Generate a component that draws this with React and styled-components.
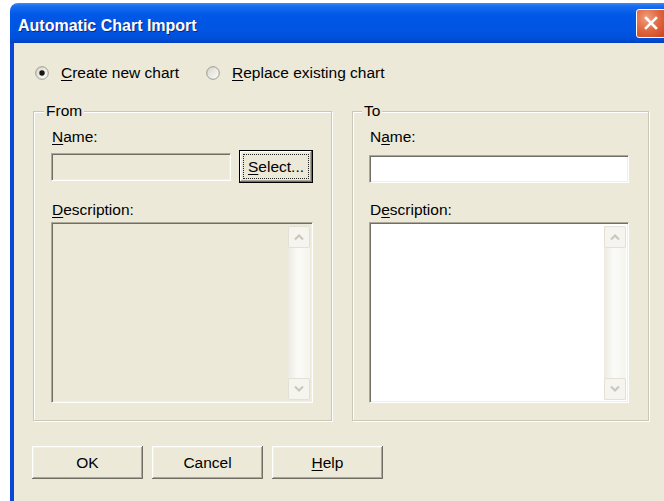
import React from "react";
import styled, { createGlobalStyle, css } from "styled-components";

const GlobalStyle = createGlobalStyle`
  html, body {
    margin: 0;
    background: #fff;
    overflow: hidden;
  }
  body {
    font-family: "Liberation Sans", Arial, sans-serif;
    font-size: 15.5px;
    color: #000;
  }
`;

const raised = css`
  box-sizing: border-box;
  background: #ece9d8;
  box-shadow: inset -1px -1px 0 #716f64, inset 1px 1px 0 #fff,
    inset -2px -2px 0 #aca899, inset 2px 2px 0 #f1efe2;
`;

const sunken = css`
  box-sizing: border-box;
  border-top: 1px solid #aca899;
  border-left: 1px solid #aca899;
  border-bottom: 1px solid #fff;
  border-right: 1px solid #fff;
  box-shadow: inset 1px 1px 0 #716f64, inset -1px -1px 0 #f1efe2;
`;

const Window = styled.div`
  margin: 3px 0 0 10px;
  width: 662px;
  height: 520px;
  display: flex;
  flex-direction: column;
`;

const TitleBar = styled.div`
  height: 40px;
  flex-shrink: 0;
  border-radius: 8px 8px 0 0;
  background: linear-gradient(
    to bottom,
    #3a8cf8 0%,
    #1a6cf0 8%,
    #0058e6 30%,
    #0055e3 70%,
    #004fd8 90%,
    #0040c2 100%
  );
  display: flex;
  align-items: center;
  justify-content: space-between;
  padding-left: 8px;
  padding-right: 6px;
`;

const Title = styled.span`
  padding-top: 5px;
  font-weight: bold;
  font-size: 16px;
  color: #fff;
  text-shadow: 1px 1px 0 #0a2a8c;
`;

const CloseButton = styled.div`
  width: 30px;
  height: 29px;
  box-sizing: border-box;
  border: 1px solid #fff;
  border-radius: 3px;
  background: radial-gradient(
    circle at 35% 30%,
    #f0a07e 0%,
    #e26a43 45%,
    #c8411a 100%
  );
  display: flex;
  align-items: center;
  justify-content: center;
`;

const Body = styled.div`
  flex: 1;
  background: #ece9d8;
  border-left: 4px solid #0a47d9;
  padding: 20px 0 0 19px;
  display: flex;
  flex-direction: column;
`;

const RadioRow = styled.div`
  display: flex;
  align-items: center;
  height: 20px;
  margin-left: 2px;
  gap: 27px;
`;

const RadioOption = styled.label`
  display: flex;
  align-items: center;
  gap: 12px;
`;

const GroupRow = styled.div`
  display: grid;
  grid-template-columns: 299px 297px;
  column-gap: 20px;
  margin-top: 20px;
`;

const GroupBox = styled.fieldset`
  box-sizing: border-box;
  margin: 0;
  min-width: 0;
  padding: 10px ${(p) => p.$right}px 17px ${(p) => p.$left}px;
  border: 1px solid #cac7b8;
  box-shadow: 1px 1px 0 #fff, inset 1px 1px 0 #fff;
  display: flex;
  flex-direction: column;
`;

const Legend = styled.legend`
  padding: 0 2px;
  margin-left: -7px;
  line-height: 16px;
  background: #ece9d8;
`;

const Label = styled.div`
  line-height: 16px;
  margin-left: 1px;
  margin-top: ${(p) => p.$top || 0}px;
`;

const FieldRow = styled.div`
  display: flex;
  align-items: ${(p) => (p.$bottom ? "flex-end" : "center")};
  gap: 8px;
  min-height: 33px;
  margin-top: 5px;
`;

const TextInput = styled.div`
  ${sunken}
  flex: 1;
  height: 28px;
  background: ${(p) => (p.$disabled ? "#ece9d8" : "#fff")};
`;

const Button = styled.div`
  ${raised}
  width: ${(p) => p.$width}px;
  height: 33px;
  display: flex;
  align-items: center;
  justify-content: center;
  flex-shrink: 0;
`;

const DefaultButton = styled(Button)`
  border: 1px solid #000;
  padding: 3px;
`;

const FocusRing = styled.span`
  flex: 1;
  align-self: stretch;
  border: 1px dotted #222;
  display: flex;
  align-items: center;
  justify-content: center;
`;

const TextArea = styled.div`
  ${sunken}
  height: 181px;
  margin-top: 4px;
  padding: 3px 2px 2px;
  display: flex;
  justify-content: flex-end;
  background: ${(p) => (p.$disabled ? "#ece9d8" : "#fff")};
`;

const ScrollBar = styled.div`
  width: 22px;
  display: flex;
  flex-direction: column;
  justify-content: space-between;
  background: linear-gradient(to right, #eceae0 0%, #fbfbf8 45%, #f5f4ee 100%);
`;

const ScrollArrow = styled.div`
  height: 22px;
  box-sizing: border-box;
  border: 1px solid #e3e1d6;
  border-radius: 2px;
  background: #f5f4ef;
  display: flex;
  align-items: center;
  justify-content: center;
`;

const ButtonRow = styled.div`
  display: flex;
  gap: 9px;
  margin: 25px 0 0 -1px;
`;

const Key = styled.u`
  text-underline-offset: 2px;
`;

const Radio = ({ checked }) => (
  <svg width="14" height="14" viewBox="0 0 14 14">
    <defs>
      <linearGradient id="radioFill" x1="0" y1="0" x2="1" y2="1">
        <stop offset="0" stopColor="#d6d4c8" />
        <stop offset="1" stopColor="#ffffff" />
      </linearGradient>
    </defs>
    <circle cx="7" cy="7" r="6.3" fill="url(#radioFill)" stroke="#9c9a8c" />
    {checked && <circle cx="7" cy="7" r="2.7" fill="#151515" />}
  </svg>
);

const Chevron = ({ up }) => (
  <svg width="12" height="8" viewBox="0 0 12 8">
    <polyline
      points={up ? "2,6.5 6,2.5 10,6.5" : "2,1.5 6,5.5 10,1.5"}
      fill="none"
      stroke="#c9c7ba"
      strokeWidth="2"
    />
  </svg>
);

const DescriptionBox = ({ disabled }) => (
  <TextArea $disabled={disabled}>
    <ScrollBar>
      <ScrollArrow>
        <Chevron up />
      </ScrollArrow>
      <ScrollArrow>
        <Chevron />
      </ScrollArrow>
    </ScrollBar>
  </TextArea>
);

export default function App() {
  return (
    <>
      <GlobalStyle />
      <Window>
        <TitleBar>
          <Title>Automatic Chart Import</Title>
          <CloseButton>
            <svg width="14" height="14" viewBox="0 0 14 14">
              <path
                d="M2 2 L12 12 M12 2 L2 12"
                stroke="#fff"
                strokeWidth="2.6"
                strokeLinecap="square"
              />
            </svg>
          </CloseButton>
        </TitleBar>
        <Body>
          <RadioRow>
            <RadioOption>
              <Radio checked />
              <span>
                <Key>C</Key>reate new chart
              </span>
            </RadioOption>
            <RadioOption>
              <Radio />
              <span>
                <Key>R</Key>eplace existing chart
              </span>
            </RadioOption>
          </RadioRow>

          <GroupRow>
            <GroupBox $left={17} $right={18}>
              <Legend>From</Legend>
              <Label>
                <Key>N</Key>ame:
              </Label>
              <FieldRow>
                <TextInput $disabled />
                <DefaultButton $width={74}>
                  <FocusRing>
                    <span>
                      <Key>S</Key>elect...
                    </span>
                  </FocusRing>
                </DefaultButton>
              </FieldRow>
              <Label $top={19}>
                <Key>D</Key>escription:
              </Label>
              <DescriptionBox disabled />
            </GroupBox>

            <GroupBox $left={16} $right={19}>
              <Legend>To</Legend>
              <Label>
                N<Key>a</Key>me:
              </Label>
              <FieldRow $bottom>
                <TextInput />
              </FieldRow>
              <Label $top={19}>
                D<Key>e</Key>scription:
              </Label>
              <DescriptionBox />
            </GroupBox>
          </GroupRow>

          <ButtonRow>
            <Button $width={111}>OK</Button>
            <Button $width={111}>Cancel</Button>
            <Button $width={111}>
              <span>
                <Key>H</Key>elp
              </span>
            </Button>
          </ButtonRow>
        </Body>
      </Window>
    </>
  );
}
